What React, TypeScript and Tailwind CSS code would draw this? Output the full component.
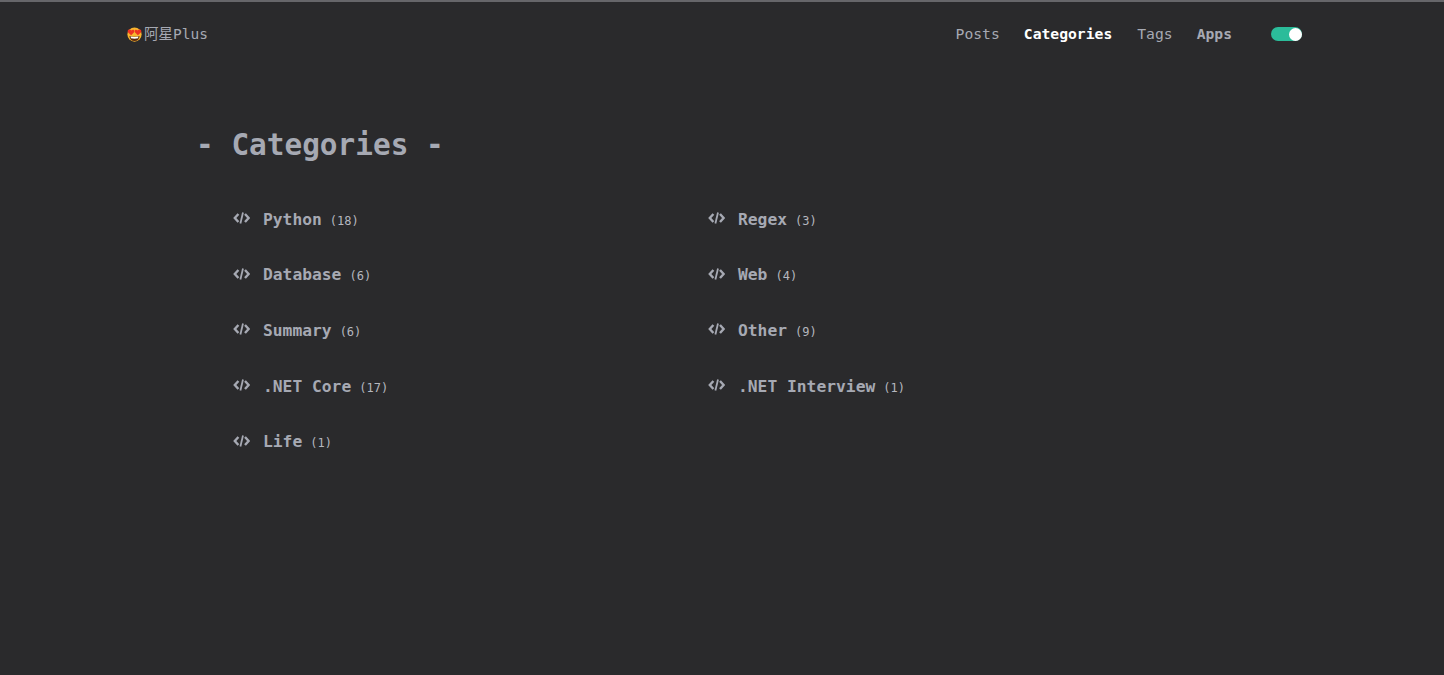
import React from "react";

const left = [
  ["Python", "18"],
  ["Database", "6"],
  ["Summary", "6"],
  [".NET Core", "17"],
  ["Life", "1"],
];
const right = [
  ["Regex", "3"],
  ["Web", "4"],
  ["Other", "9"],
  [".NET Interview", "1"],
];

function CodeIcon() {
  return (
    <svg width="17" height="14" viewBox="0 0 17 14" fill="none" className="relative top-[3.5px] shrink-0 self-start text-[#a6a9b3]" stroke="currentColor" strokeWidth="2.4">
      <path d="M5.4 3 L1.8 7 L5.4 11" />
      <path d="M12 3 L15.6 7 L12 11" />
      <path d="M10 1.5 L7.4 12.5" strokeWidth="1.8" />
    </svg>
  );
}

function Face() {
  return (
    <svg width="15" height="15" viewBox="0 0 16 16" className="relative -top-px shrink-0">
      <circle cx="8" cy="8" r="7.6" fill="#f9b52e" />
      <path d="M2.6 9.6 Q8 11 13.4 9.6 Q12.8 15 8 15 Q3.2 15 2.6 9.6Z" fill="#5b2a0e" />
      <path d="M3.8 10.2 Q8 11.2 12.2 10.2 L11.8 12 Q8 12.8 4.2 12 Z" fill="#fff" />
      <path d="M4.4 8.8 L0.9 5.6 Q0.2 3 2.4 2.7 Q3.9 2.5 4.6 3.8 Q5.5 2.5 7 2.9 Q8.4 3.6 7.6 5.6 Z" fill="#ee3322" />
      <path d="M11.6 8.8 L15.1 5.6 Q15.8 3 13.6 2.7 Q12.1 2.5 11.4 3.8 Q10.5 2.5 9 2.9 Q7.6 3.6 8.4 5.6 Z" fill="#ee3322" />
    </svg>
  );
}

function Item({ name, n }: { name: string; n: string }) {
  return (
    <li className="flex h-[55.7px] items-baseline pt-[14px]">
      <CodeIcon />
      <a className="ml-[13px] text-[16.3px] leading-[24px] font-bold text-[#a6a9b3]">{name}</a>
      <span className="ml-[8px] text-[12px] text-[#b5b7bf]">({n})</span>
    </li>
  );
}

export default function App() {
  return (
    <div className="min-h-[675px] border-t-2 border-[#66666a] bg-[#2a2a2c] font-['DejaVu_Sans_Mono','Noto_Sans_CJK_SC',monospace]">
      <header className="flex h-[65px] items-center justify-between pl-[127px] pr-[142px]">
        <a className="mt-px flex items-center text-[14.5px] text-[#a6a9b3]">
          <Face />
          <span className="ml-[2px]">阿星Plus</span>
        </a>
        <nav className="flex items-center text-[14.7px]">
          <a className="text-[#a6a9b3]">Posts</a>
          <a className="ml-[24px] font-bold text-white">Categories</a>
          <a className="ml-[25px] text-[#a6a9b3]">Tags</a>
          <a className="ml-[24px] font-bold text-[#a6a9b3]">Apps</a>
          <span className="ml-[39px] flex h-[14px] w-[31px] items-center justify-end rounded-full bg-[#2bbc9a]">
            <span className="h-[13px] w-[13px] rounded-full bg-white" />
          </span>
        </nav>
      </header>
      <main className="pl-[196px] pt-[59px]">
        <h1 className="text-[29.4px] leading-[38px] font-bold text-[#a6a9b3]">- Categories -</h1>
        <div className="mt-[29.5px] grid grid-cols-[475px_1fr] pl-[37px]">
          <ul>
            {left.map(([a, b]) => (
              <Item key={a} name={a} n={b} />
            ))}
          </ul>
          <ul>
            {right.map(([a, b]) => (
              <Item key={a} name={a} n={b} />
            ))}
          </ul>
        </div>
      </main>
    </div>
  );
}
